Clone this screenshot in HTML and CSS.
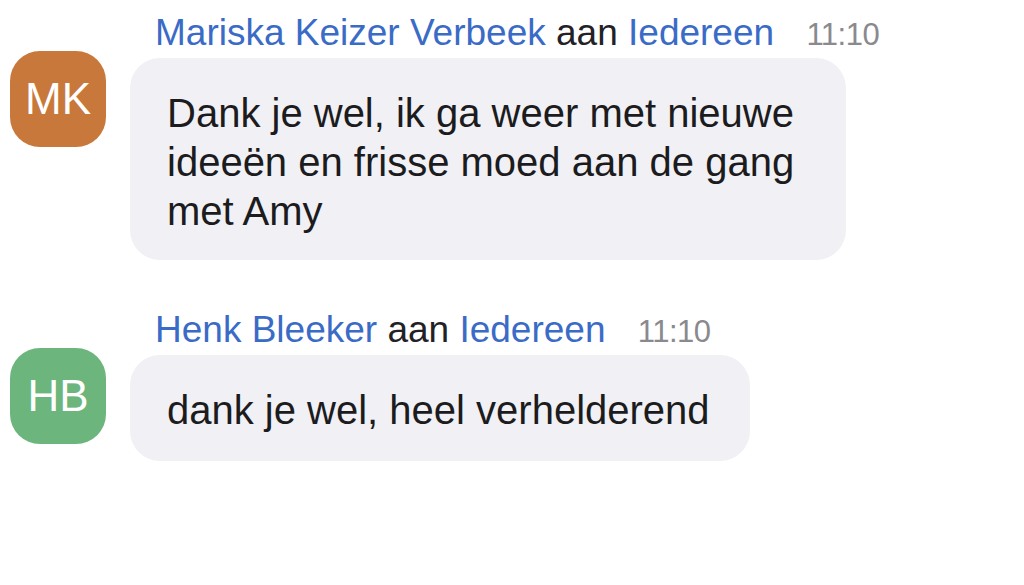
FILE: index.html
```html
<!DOCTYPE html>
<html lang="nl">
<head>
<meta charset="utf-8">
<title>Chat</title>
<link rel="stylesheet" href="styles.css">
</head>
<body>
<main class="chat">
  <article class="msg">
    <div class="meta">
      <span class="who">Mariska Keizer Verbeek</span> <span class="to">aan</span> <span class="who">Iedereen</span> <span class="time">11:10</span>
    </div>
    <div class="avatar avatar-orange">MK</div>
    <div class="bubble bubble-wide">Dank je wel, ik ga weer met nieuwe ideeën en frisse moed aan de gang met Amy</div>
  </article>
  <article class="msg">
    <div class="meta">
      <span class="who">Henk Bleeker</span> <span class="to">aan</span> <span class="who">Iedereen</span> <span class="time">11:10</span>
    </div>
    <div class="avatar avatar-green">HB</div>
    <div class="bubble bubble-single">dank je wel, heel verhelderend</div>
  </article>
</main>
</body>
</html>
```

FILE: styles.css
```css
html, body {
  margin: 0;
  padding: 0;
  background: #ffffff;
}

body {
  font-family: "Liberation Sans", Arial, Helvetica, sans-serif;
  color: #1c1c1e;
  width: 1024px;
  height: 585px;
  overflow: hidden;
}

.chat {
  padding: 13px 0 0 10px;
  display: flex;
  flex-direction: column;
  gap: 50px;
}

.msg {
  display: grid;
  grid-template-columns: 96px max-content;
  column-gap: 24px;
  row-gap: 3px;
  align-items: start;
}

.meta {
  grid-column: 2;
  padding-left: 25px;
  font-size: 37px;
  line-height: 40px;
  white-space: nowrap;
}

.who {
  color: #3a6bc6;
}

.to {
  color: #222226;
}

.time {
  color: #8a8a8e;
  font-size: 31px;
  letter-spacing: -0.5px;
  margin-left: 22px;
}

.avatar {
  grid-column: 1;
  width: 96px;
  height: 96px;
  margin-top: -7px;
  border-radius: 30px;
  color: #ffffff;
  font-size: 44px;
  display: flex;
  align-items: center;
  justify-content: center;
}

.avatar-orange {
  background: #c8783a;
}

.avatar-green {
  background: #6cb57c;
}

.bubble {
  grid-column: 2;
  background: #f1f1f5;
  border-radius: 30px;
  padding: 31px 40px 24px 37px;
  font-size: 40px;
  line-height: 49px;
}

.bubble-wide {
  width: 639px;
}

.bubble-single {
  padding-bottom: 26px;
}
```
